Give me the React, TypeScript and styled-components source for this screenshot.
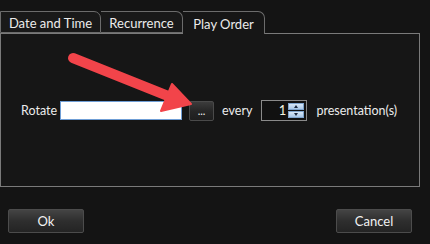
import React, { useState } from 'react';
import styled, { createGlobalStyle } from 'styled-components';

const GlobalStyle = createGlobalStyle`
  html, body {
    margin: 0;
    padding: 0;
    background: #141414;
    font-family: 'Lato', 'Segoe UI', 'Liberation Sans', sans-serif;
    color: #ececec;
  }
`;

const Window = styled.div`
  position: relative;
  width: 430px;
  height: 244px;
  padding-top: 11px;
  box-sizing: border-box;
  background: #141414;
  overflow: hidden;
`;

const TabStrip = styled.div`
  display: flex;
  height: 22px;
`;

const Tab = styled.div<{ $active?: boolean; $first?: boolean; $width: number }>`
  display: flex;
  align-items: center;
  justify-content: center;
  box-sizing: border-box;
  width: ${(p) => p.$width}px;
  height: ${(p) => (p.$active ? 23 : 22)}px;
  background: ${(p) => (p.$active ? '#161616' : '#191919')};
  border: 1px solid #6c6c6c;
  border-bottom: ${(p) => (p.$active ? 'none' : '1px solid #6c6c6c')};
  border-left: ${(p) => (p.$first ? '1px solid #6c6c6c' : 'none')};
  border-radius: 0 7px 0 0;
  font-size: 13px;
  padding-top: 1px;
  position: relative;
  z-index: ${(p) => (p.$active ? 2 : 1)};
`;

const Panel = styled.div`
  box-sizing: border-box;
  width: 420px;
  height: 154px;
  border: 1px solid #7a7a7a;
  background: #161616;
  display: flex;
  align-items: center;
  padding: 0 0 0 20px;
`;

const Row = styled.div`
  display: flex;
  align-items: center;
  margin-top: 1px;
`;

const Label = styled.span<{ $gap?: number }>`
  font-size: 12.5px;
  margin-right: ${(p) => p.$gap ?? 0}px;
`;

const TextInput = styled.input`
  box-sizing: border-box;
  width: 122px;
  height: 19px;
  border: 1px solid #6f9ed6;
  background: #ffffff;
  outline: none;
  margin: 0;
  padding: 0 3px;
`;

const Browse = styled.button`
  box-sizing: border-box;
  width: 25px;
  height: 20px;
  margin: 0 8px 0 7px;
  border: 1px solid #4a4a4a;
  border-radius: 2px;
  background: linear-gradient(#3c3c3c, #262626 50%, #1e1e1e);
  color: #f0f0f0;
  font-size: 11px;
  padding: 0;
  line-height: 10px;
  font-family: inherit;
`;

const Spin = styled.div`
  box-sizing: border-box;
  display: flex;
  width: 46px;
  height: 21px;
  margin: 0 9px;
  border: 1px solid #8a8a8a;
  background: #111;
  padding: 2px;
`;

const SpinValue = styled.div`
  flex: 1;
  text-align: right;
  font-size: 13px;
  line-height: 15px;
  padding-right: 2px;
  color: #f4f4e0;
`;

const SpinButtons = styled.div`
  width: 16px;
  display: flex;
  flex-direction: column;
  gap: 1px;
`;

const SpinBtn = styled.div<{ $up?: boolean }>`
  flex: 1;
  background: linear-gradient(#d8e8f8, #a9c7e8);
  border: 1px solid #7fa4cc;
  display: flex;
  align-items: center;
  justify-content: center;
  &::after {
    content: '';
    border-left: 2.5px solid transparent;
    border-right: 2.5px solid transparent;
    ${(p) => (p.$up ? 'border-bottom: 3px solid #1d2b40;' : 'border-top: 3px solid #1d2b40;')}
  }
`;

const Footer = styled.div`
  display: flex;
  justify-content: space-between;
  padding: 22px 18px 0 8px;
`;

const DialogButton = styled.button`
  box-sizing: border-box;
  width: 76px;
  height: 24px;
  border: 1px solid #4c4c4c;
  border-radius: 2px;
  background: linear-gradient(#444444, #2e2e2e 50%, #242424);
  color: #f2f2f2;
  font-family: inherit;
  font-size: 13px;
  padding: 0;
`;

const Overlay = styled.svg`
  position: absolute;
  left: 0;
  top: 0;
  pointer-events: none;
`;

const tabs = [
  { label: 'Date and Time', width: 101 },
  { label: 'Recurrence', width: 82 },
  { label: 'Play Order', width: 82 },
];

export default function App() {
  const [active] = useState(2);

  return (
    <>
      <GlobalStyle />
      <Window>
        <TabStrip>
          {tabs.map((t, i) => (
            <Tab key={t.label} $active={i === active} $first={i === 0} $width={t.width}>
              {t.label}
            </Tab>
          ))}
        </TabStrip>
        <Panel>
          <Row>
            <Label $gap={3}>Rotate</Label>
            <TextInput />
            <Browse>...</Browse>
            <Label>every</Label>
            <Spin>
              <SpinValue>1</SpinValue>
              <SpinButtons>
                <SpinBtn $up />
                <SpinBtn />
              </SpinButtons>
            </Spin>
            <Label>presentation(s)</Label>
          </Row>
        </Panel>
        <Footer>
          <DialogButton>Ok</DialogButton>
          <DialogButton>Cancel</DialogButton>
        </Footer>
        <Overlay width="430" height="244" viewBox="0 0 430 244">
          <line x1="73" y1="58" x2="168" y2="96" stroke="#f2444a" strokeWidth="10" strokeLinecap="round" />
          <polygon points="172,84 191,104 161,111" fill="#f2444a" stroke="#f2444a" strokeWidth="2" strokeLinejoin="round" />
        </Overlay>
      </Window>
    </>
  );
}
